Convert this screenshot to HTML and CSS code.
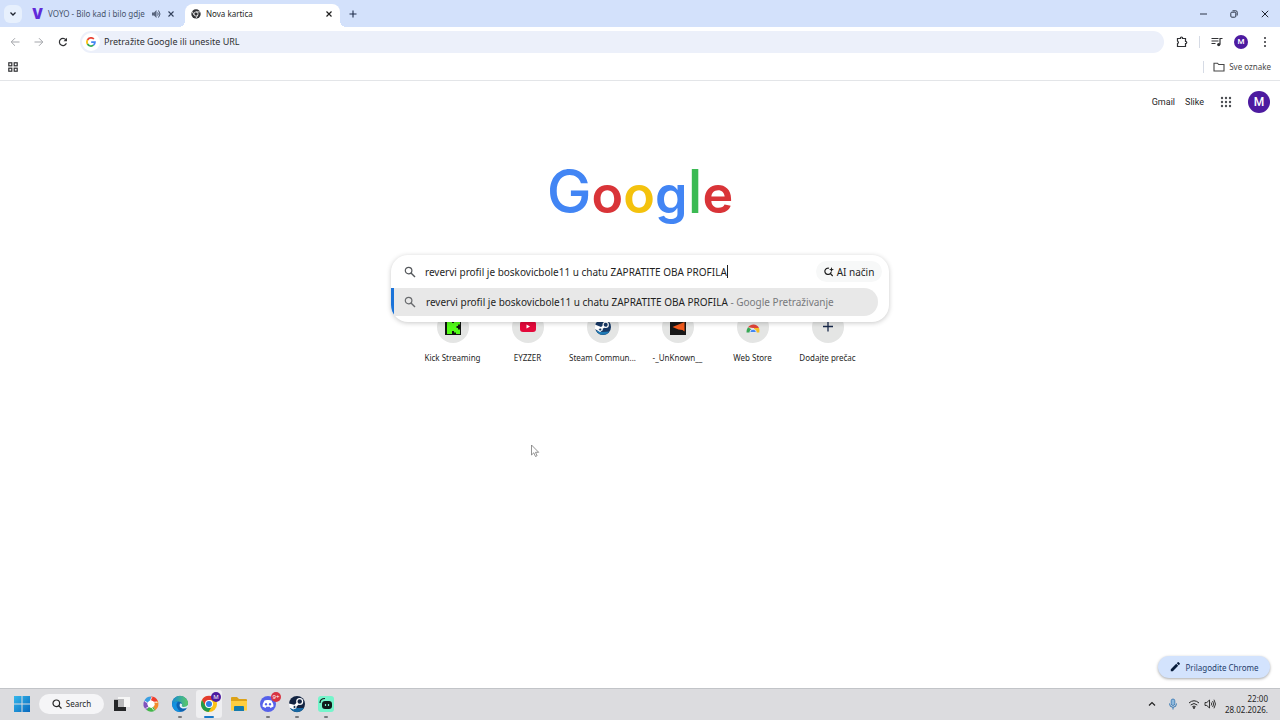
FILE: index.html
```html
<!DOCTYPE html>
<html lang="hr">
<head>
  <meta charset="UTF-8">
  <meta name="viewport" content="width=device-width, initial-scale=1.0">
  <title>Nova kartica</title>
  <link rel="stylesheet" href="styles.css">
</head>
<body>
  <!-- Tabs -->
  <header class="tab-strip">
    <button class="tab-search" aria-label="Pretraži kartice">
      <svg width="8" height="8" viewBox="0 0 8 8"><path d="M1.500 2.500 4 5l2.500-2.500" fill="none" stroke="#1f2430" stroke-width="1.300"/></svg>
    </button>
    <div class="tab">
      <span class="voyo" aria-hidden="true">V</span>
      <span class="tab-title">VOYO - Bilo kad i bilo gdje</span>
      <svg width="10" height="10" viewBox="0 0 10 10"><path d="M1 3.500h2L5.500 1v8L3 6.500H1z" fill="#59657d"/><path d="M6.500 3.500q1.500 1.500 0 3M7.500 1.500q3 3.500 0 7" fill="none" stroke="#46536b"/></svg>
      <button class="tab-close" aria-label="Zatvori"><svg width="8" height="8" viewBox="0 0 8 8"><path d="m1.500 1.500 5 5m0-5-5 5" stroke="#33415c" stroke-width="1.100"/></svg></button>
    </div>
    <div class="tab tab-active">
      <svg width="10" height="10" viewBox="0 0 10 10"><circle cx="5" cy="5" r="4.700" fill="#303134"/><circle cx="5" cy="5" r="2.100" fill="#303134" stroke="#fff" stroke-width=".8"/><path d="M5 2.900h4.300M3.200 6.100 1.100 2.500M6.800 6.100 4.700 9.700" stroke="#fff" stroke-width=".8"/></svg>
      <span class="tab-title">Nova kartica</span>
      <button class="tab-close" aria-label="Zatvori"><svg width="8" height="8" viewBox="0 0 8 8"><path d="m1.500 1.500 5 5m0-5-5 5" stroke="#1f1f1f" stroke-width="1.200"/></svg></button>
    </div>
    <button class="new-tab" aria-label="Nova kartica"><svg width="8" height="8" viewBox="0 0 8 8"><path d="M4 .5v7M.5 4h7" stroke="#1f2d4a" stroke-width="1.100"/></svg></button>
    <div class="window-controls">
      <button aria-label="Minimiziraj"><svg width="8" height="8" viewBox="0 0 8 8"><path d="M1 4h7" stroke="#2c3547"/></svg></button>
      <button aria-label="Vrati"><svg width="8" height="8" viewBox="0 0 8 8"><rect x=".8" y="2.200" width="5" height="5" rx="1" fill="none" stroke="#2c3547"/><path d="M2.500.8h3.300q1.400 0 1.400 1.400v3.300" fill="none" stroke="#2c3547"/></svg></button>
      <button aria-label="Zatvori prozor"><svg width="8" height="8" viewBox="0 0 8 8"><path d="m.8.8 6.400 6.400m0-6.400L.8 7.200" stroke="#1f2430"/></svg></button>
    </div>
  </header>

  <!-- Toolbar -->
  <nav class="toolbar">
    <button class="nav-btn" aria-label="Natrag"><svg width="10" height="10" viewBox="0 0 10 10"><path d="M9.500 5h-8M5 1.200 1.200 5 5 8.800" fill="none" stroke="#a3a5aa"/></svg></button>
    <button class="nav-btn" aria-label="Naprijed"><svg width="10" height="10" viewBox="0 0 10 10"><path d="M.5 5h8M5 1.200 8.800 5 5 8.800" fill="none" stroke="#a3a5aa"/></svg></button>
    <button class="nav-btn" aria-label="Osvježi"><svg width="10" height="10" viewBox="0 0 10 10"><path d="M8.400 6.200A3.600 3.600 0 1 1 7.800 2.700" fill="none" stroke="#303134" stroke-width="1.200"/><path d="M9 .7v3.500H5.500z" fill="#303134"/></svg></button>
    <div class="omnibox">
      <span class="g-badge"><svg width="10" height="10" viewBox="0 0 10 10" fill="none" stroke-width="1.700"><path d="M7.900 2A4 4 0 0 0 1.500 3" stroke="#ea4335"/><path d="M1.500 3a4 4 0 0 0 0 4" stroke="#fbbc05"/><path d="M1.500 7a4 4 0 0 0 6 1.200" stroke="#34a853"/><path d="M7.500 8.200A4 4 0 0 0 9 5.100H5.200" stroke="#4285f4"/></svg></span>
      <input type="text" placeholder="Pretražite Google ili unesite URL" aria-label="Adresna traka">
    </div>
    <div class="toolbar-actions">
      <button aria-label="Proširenja"><svg width="12" height="12" viewBox="0 0 12 12"><path d="M1.500 2.500h3V1.700q1-1.400 2 0v.8h3v3h.6q1.300.9 0 2h-.6v3h-8v-3q1.900-1 0-2.500z" fill="none" stroke="#303134" stroke-width="1.200"/></svg></button>
      <span class="divider"></span>
      <button aria-label="Mediji"><svg width="12" height="12" viewBox="0 0 12 12"><path d="M.5 2.500h7M.5 5h7M.5 7.500h4M9 8.500V2.500h2.500" fill="none" stroke="#303134" stroke-width="1.200"/><circle cx="7.700" cy="8.600" r="1.600" fill="#303134"/></svg></button>
      <button class="avatar avatar-small">M</button>
      <button aria-label="Izbornik"><svg width="12" height="12" viewBox="0 0 12 12" fill="#303134"><circle cx="6" cy="2" r="1"/><circle cx="6" cy="6" r="1"/><circle cx="6" cy="10" r="1"/></svg></button>
    </div>
  </nav>

  <div class="bookmarks">
    <button aria-label="Grupe kartica"><svg width="10" height="10" viewBox="0 0 10 10" fill="none" stroke="#303134" stroke-width="1.200"><rect x=".8" y=".8" width="3" height="3"/><rect x="6.200" y=".8" width="3" height="3"/><rect x=".8" y="6.200" width="3" height="3"/><rect x="6.200" y="6.200" width="3" height="3"/></svg></button>
    <span class="divider"></span>
    <button class="all-bookmarks">
      <svg width="12" height="10" viewBox="0 0 12 10"><path d="M1 1.200h3.500l1.200 1.300H11V9H1z" fill="none" stroke="#474747" stroke-width="1.100"/></svg>
      Sve oznake
    </button>
  </div>

  <!-- New tab page -->
  <main class="ntp">
    <div class="account">
      <a href="#">Gmail</a>
      <a href="#">Slike</a>
      <button class="apps" aria-label="Aplikacije">
        <svg width="12" height="12" viewBox="0 0 12 12" fill="#4b4e52"><circle cx="2" cy="2" r="1.200"/><circle cx="6" cy="2" r="1.200"/><circle cx="10" cy="2" r="1.200"/><circle cx="2" cy="6" r="1.200"/><circle cx="6" cy="6" r="1.200"/><circle cx="10" cy="6" r="1.200"/><circle cx="2" cy="10" r="1.200"/><circle cx="6" cy="10" r="1.200"/><circle cx="10" cy="10" r="1.200"/></svg>
      </button>
      <button class="avatar">M</button>
    </div>

    <h1 class="logo"><span class="blue tall">G</span><span class="red">o</span><span class="yellow">o</span><span class="blue">g</span><span class="green tall">l</span><span class="red">e</span></h1>

    <div class="search">
      <form class="search-box">
        <div class="search-row">
          <svg class="lens" width="12" height="12" viewBox="0 0 12 12"><circle cx="4.600" cy="4.600" r="3.300" fill="none" stroke="#55585c" stroke-width="1.200"/><path d="m7 7 4 4" stroke="#55585c" stroke-width="1.400"/></svg>
          <input class="query" type="text" aria-label="Pretraživanje" value="revervi profil je boskovicbole11 u chatu ZAPRATITE OBA PROFILA">
          <span class="caret"></span>
          <button type="button" class="ai-mode">
            <svg width="10" height="10" viewBox="0 0 10 10"><path d="M5 1.200A3.200 3.200 0 1 0 7.200 5M6 6.200 8.700 9" fill="none" stroke="#1f1f1f" stroke-width="1.200"/><path d="M7.500 0 8.200 1.900 10 2.600l-1.800.7-.7 1.900-.7-1.900L5 2.600l1.800-.7z" fill="#1f1f1f"/></svg>
            AI način
          </button>
        </div>
        <a class="suggestion" href="#">
          <svg class="lens" width="12" height="12" viewBox="0 0 12 12"><circle cx="4.600" cy="4.600" r="3.300" fill="none" stroke="#696b6e" stroke-width="1.200"/><path d="m7 7 4 4" stroke="#696b6e" stroke-width="1.400"/></svg>
          <span class="suggestion-text">revervi profil je boskovicbole11 u chatu ZAPRATITE OBA PROFILA <span class="hint">- Google Pretraživanje</span></span>
        </a>
      </form>
    </div>

    <div class="shortcuts">
      <a class="shortcut" href="#">
        <span class="tile"><svg width="16" height="16" viewBox="0 0 16 16"><path d="M0 0h16v16H0z" fill="#101510"/><path d="M2 1h5v3h2V2.500h2V1h4v4.500h-2V7h-1.500v2H13v1.500h2V15h-4v-1.500H9V12H7v3H2z" fill="#53fc18"/></svg></span>
        Kick Streaming
      </a>
      <a class="shortcut" href="#">
        <span class="tile"><svg width="16" height="16" viewBox="0 0 16 16"><rect y="2" width="16" height="11" rx="3" fill="#e4093b"/><path d="M6.500 5.500v4l3.500-2z" fill="#fff"/></svg></span>
        EYZZER
      </a>
      <a class="shortcut" href="#">
        <span class="tile"><svg width="16" height="16" viewBox="0 0 16 16"><circle cx="8" cy="8" r="8" fill="#173965"/><path d="M1 11.500A8 8 0 0 0 14.500 12.500L7 13z" fill="#1e79b4"/><path d="M0 5.500 6 8l2 3-3 2-5-3z" fill="#fff"/><path d="m5.500 10 5-4" stroke="#fff" stroke-width="2.500"/><circle cx="5.200" cy="10.500" r="1.500" fill="#173965" stroke="#fff" stroke-width=".8"/><circle cx="10.700" cy="5.800" r="2.600" fill="#173965" stroke="#fff" stroke-width="1.200"/></svg></span>
        Steam Commun...
      </a>
      <a class="shortcut" href="#">
        <span class="tile"><svg width="16" height="16" viewBox="0 0 16 16"><path d="M0 0h16v16H0z" fill="#171717"/><path d="M2.500 8 14.500 3v9.500l-2-1.500-4-.5z" fill="#f35b1d"/></svg></span>
        -_UnKnown__
      </a>
      <a class="shortcut" href="#">
        <span class="tile"><svg width="16" height="16" viewBox="0 0 16 16"><path d="M3 8.200A6.500 6.500 0 0 1 14 9H8z" fill="#df4438"/><path d="M3 8.200q-1.500 2-1.500 5.300h4.300l1-3z" fill="#37a854"/><path d="M9 9h5q.8 2 .3 4.500H9z" fill="#f5bd25"/><path d="M4.800 13.500a3.300 3.300 0 0 1 6.600 0z" fill="#4285f4" stroke="#f5f5f5" stroke-width=".8"/></svg></span>
        Web Store
      </a>
      <a class="shortcut" href="#">
        <span class="tile"><svg width="16" height="16" viewBox="0 0 16 16"><path d="M8 2.500v10M3 7.500h10" stroke="#18294a" stroke-width="1.300"/></svg></span>
        Dodajte prečac
      </a>
    </div>

    <button class="customize">
      <svg width="10" height="10" viewBox="0 0 10 10"><path d="M.8 7.200 6.200 1.800l2 2L2.800 9.200l-2 .1zM6.800 1.200l.9-.9q.5-.4 1 0l1 1q.4.500 0 1l-.9.900z" fill="#071c3c"/></svg>
      Prilagodite Chrome
    </button>
    <svg class="pointer" width="10" height="14" viewBox="0 0 10 14"><path d="M1.500 1v10l2.300-2.200L5.500 12.500l1.600-.8-1.600-3.400h3.200z" fill="#fff" stroke="#777" stroke-width=".8"/></svg>
  </main>

  <!-- Windows taskbar -->
  <footer class="taskbar">
    <button class="task" aria-label="Start">
      <svg width="20" height="20" viewBox="0 0 20 20"><defs><linearGradient id="win" x2="1" y2="1"><stop stop-color="#35b8ec"/><stop offset="1" stop-color="#0869be"/></linearGradient></defs><path d="M2 2h7.500v7.500H2zM10.500 2H18v7.500h-7.500zM2 10.500h7.500V18H2zM10.500 10.500H18V18h-7.500z" fill="url(#win)"/></svg>
    </button>
    <button class="task-search">
      <svg width="10" height="10" viewBox="0 0 10 10"><circle cx="4.300" cy="4.300" r="3.300" fill="none" stroke="#252525" stroke-width="1.200"/><path d="m6.700 6.700 2.800 2.800" stroke="#252525" stroke-width="1.200"/></svg>
      Search
    </button>
    <button class="task" aria-label="Task View"><svg width="20" height="20" viewBox="0 0 20 20"><path d="M6 3h12v10H6z" fill="#f6f6f6"/><path d="M2 5h10v9H2z" fill="#b8b8ba"/><path d="M2 6h4v7h8v4H2z" fill="#252628"/></svg></button>
    <button class="task" aria-label="Fotografije"><svg width="20" height="20" viewBox="0 0 20 20"><circle cx="10" cy="10" r="7" fill="#fff"/><g fill="none" stroke-width="4"><path d="M10 4.500a5.500 5.500 0 0 1 5 3.200" stroke="#ee3d2e"/><path d="M15 7.700a5.500 5.500 0 0 1-1.800 6.800" stroke="#f28b2c"/><path d="M13.200 14.500a5.500 5.500 0 0 1-6.500-.1" stroke="#42b649"/><path d="M6.700 14.400A5.500 5.500 0 0 1 5 7.700" stroke="#8053bd"/><path d="M5 7.700a5.500 5.500 0 0 1 5-3.200" stroke="#3b9fe1"/></g><path d="m9.500 6 3 2 1 3-2.500 3-3.500-1L6.500 9z" fill="#fff"/><path d="M9.500 6 11 3M12.500 8l4 .5M11 14l2 2.500M7.500 13l-3 1.500M6.500 9 3.500 7" stroke="#fff" stroke-width=".8"/></svg></button>
    <button class="task open" aria-label="Edge"><svg width="20" height="20" viewBox="0 0 20 20"><defs><linearGradient id="edge" x2="1"><stop stop-color="#168bd5"/><stop offset="1" stop-color="#5bcb64"/></linearGradient></defs><circle cx="10" cy="10" r="8" fill="#0c62b2"/><path d="M2 10a8 8 0 0 1 16-.5q0 4-4.500 4-2.500-.2-1.500-2Q12.500 8 8.500 7.500 4 7.500 2 10z" fill="url(#edge)"/><path d="M2 10q2-3 6.500-2.500Q6 9 6.500 12q1 4 5 5.700Q3 19 2 10z" fill="#1391df"/><path d="M10 9.500q-1.500 4 2.500 5 3 .5 5.500-1.500v-2q-2 2.500-5 2-2-.5-1-2 .5-2-2-1.500z" fill="#e4f2f7"/></svg></button>
    <button class="task current" aria-label="Chrome">
      <svg width="20" height="20" viewBox="0 0 20 20"><circle cx="10" cy="10" r="8" fill="#fbc116"/><path d="M3 6a8 8 0 0 1 14 0h-7l-3.500 6z" fill="#e33b2e"/><path d="M3 6a8 8 0 0 0 6.500 12l3.800-6H6.500z" fill="#229a4b"/><circle cx="10" cy="10" r="4" fill="#fff"/><circle cx="10" cy="10" r="3" fill="#307ee7"/></svg>
      <span class="badge purple">M</span>
    </button>
    <button class="task" aria-label="Datoteke"><svg width="20" height="20" viewBox="0 0 20 20"><path d="M2 4q0-1 1-1h5l2 2h7q1 0 1 1v10H2z" fill="#dca218"/><path d="M2 7h16v9.500H2z" fill="#ffce40"/><path d="M5 13q0-1 1-1h8q1 0 1 1v4H5z" fill="#157bad"/></svg></button>
    <button class="task open" aria-label="Discord">
      <svg width="20" height="20" viewBox="0 0 20 20"><circle cx="10" cy="10" r="8" fill="#5661ea"/><path d="M6.500 6.500 9 6h2l2.500.5q2 3 2 6l-3 1.500-.8-1.200H8.300L7.500 14l-3-1.500q0-3 2-6z" fill="#fff"/><ellipse cx="8" cy="10.300" rx="1.100" ry="1.300" fill="#5661ea"/><ellipse cx="12" cy="10.300" rx="1.100" ry="1.300" fill="#5661ea"/></svg>
      <span class="badge red-badge">9+</span>
    </button>
    <button class="task open" aria-label="Steam"><svg width="20" height="20" viewBox="0 0 20 20"><circle cx="10" cy="10" r="8" fill="#132442"/><path d="M3 14a8 8 0 0 0 14 0z" fill="#1667a2"/><path d="M2 9.500 8 11l1.500 3-3 1.500-4.300-2z" fill="#fff"/><path d="m7.500 12.500 5-4.500" stroke="#fff" stroke-width="2.800"/><circle cx="7.500" cy="13" r="1.500" fill="#17385d" stroke="#fff" stroke-width=".8"/><circle cx="12.700" cy="7.500" r="2.900" fill="#132442" stroke="#fff" stroke-width="1.300"/></svg></button>
    <button class="task open" aria-label="Streamlabs"><svg width="20" height="20" viewBox="0 0 20 20"><rect x="2" y="2" width="16" height="16" rx="3" fill="#75f5cb"/><rect x="6" y="7" width="10" height="8" rx="3" fill="#101b1b"/><path d="M4 9q0-4.500 5-4.500" fill="none" stroke="#101b1b" stroke-width="1.200"/><path d="M9.500 10v2m3-2v2" stroke="#75f5cb" stroke-width="1.200"/></svg></button>

    <div class="tray">
      <button aria-label="Skrivene ikone"><svg width="12" height="12" viewBox="0 0 12 12"><path d="m3 7.500 3-3 3 3" fill="none" stroke="#222" stroke-width="1.200"/></svg></button>
      <button aria-label="Mikrofon"><svg width="12" height="12" viewBox="0 0 12 12"><rect x="4.200" y="1" width="3.600" height="6.500" rx="1.800" fill="#8fb9dc" stroke="#3275b2" stroke-width=".8"/><path d="M2.500 5.500q0 3.800 3.500 3.800t3.500-3.800M6 9.300v2.200" fill="none" stroke="#3275b2"/></svg></button>
      <button class="net" aria-label="Mreža i zvuk">
        <svg width="12" height="12" viewBox="0 0 12 12" fill="none" stroke="#242424"><path d="M1 5q5-4.500 10 0M2.700 7q3.300-3 6.600 0M4.300 8.800q1.700-1.500 3.400 0"/><circle cx="6" cy="9.900" r=".6" fill="#242424"/></svg>
        <svg width="12" height="12" viewBox="0 0 12 12" fill="none" stroke="#242424"><path d="M1 4.500h1.800L5.500 2v8L2.800 7.500H1zM7.200 4.500q1.200 1.500 0 3M8.600 3q2.300 3 0 6M10 1.700q3 4.300 0 8.600" stroke-width=".9"/></svg>
      </button>
      <div class="clock"><time>22:00</time><time>28.02.2026.</time></div>
    </div>
  </footer>
</body>
</html>
```

FILE: styles.css
```css
* {
  box-sizing: border-box;
}
body {
  margin: 0;
  height: 100vh;
  display: flex;
  flex-direction: column;
  overflow: hidden;
  font-family: "Noto Sans", "Open Sans", sans-serif;
  font-size: 8px;
  color: #1f1f1f;
  background-color: #fff;
}
button,
input {
  font: inherit;
  color: inherit;
  border: none;
  background: none;
  padding: 0;
  outline: none;
}
button {
  display: flex;
  align-items: center;
  justify-content: center;
  cursor: pointer;
}
a {
  color: inherit;
  text-decoration: none;
}
svg {
  display: block;
  flex-shrink: 0;
}

/* tabs */
.tab-strip {
  display: flex;
  align-items: center;
  height: 27px;
  padding-left: 4px;
  background-color: #d3e1fb;
}
.tab-search {
  width: 18px;
  height: 18px;
  border-radius: 6px;
  background-color: #e7f0fd;
}
.tab {
  display: flex;
  align-items: center;
  gap: 6px;
  width: 159px;
  height: 23px;
  padding: 0 6px 4px 10px;
  align-self: flex-end;
  color: #46536b;
}
.tab-title {
  flex: 1;
  white-space: nowrap;
}
.tab-active {
  position: relative;
  width: 155px;
  margin-left: 4px;
  padding-left: 6px;
  gap: 5px;
  background-color: #fff;
  border-radius: 8px 8px 0 0;
  color: #1f1f1f;
}
/* flared feet of the active tab */
.tab-active::before,
.tab-active::after {
  content: "";
  position: absolute;
  bottom: 0;
  width: 6px;
  height: 6px;
}
.tab-active::before {
  right: 100%;
  background: radial-gradient(circle at 0 0, transparent 6px, #fff 6px);
}
.tab-active::after {
  left: 100%;
  background: radial-gradient(circle at 100% 0, transparent 6px, #fff 6px);
}
.tab-close {
  width: 10px;
  height: 10px;
}
.voyo {
  width: 10px;
  font-family: Inter, sans-serif;
  font-size: 14px;
  font-weight: 900;
  color: #6029d9;
}
.new-tab {
  width: 18px;
  height: 18px;
  margin-left: 4px;
}
.window-controls {
  display: flex;
  margin-left: auto;
}
.window-controls button {
  width: 31px;
  height: 27px;
}

/* toolbar */
.toolbar {
  display: flex;
  align-items: center;
  height: 29px;
  padding: 0 9px 0 3px;
}
.nav-btn {
  width: 24px;
  height: 24px;
}
.omnibox {
  flex: 1;
  display: flex;
  align-items: center;
  gap: 4px;
  height: 22px;
  margin-left: 5px;
  padding-left: 2px;
  border-radius: 11px;
  background-color: #ecf0fa;
}
.omnibox input {
  flex: 1;
  font-size: 9px;
}
.omnibox input::placeholder {
  color: #303134;
}
.g-badge {
  padding: 4px;
  border-radius: 50%;
  background-color: #fff;
}
.toolbar-actions {
  display: flex;
  align-items: center;
  gap: 11px;
  padding-left: 12px;
}
.divider {
  width: 1px;
  height: 12px;
  background-color: #d6dbe5;
}
.avatar {
  width: 22px;
  height: 22px;
  border-radius: 50%;
  background-color: #4d1ba0;
  color: #fff;
  font-family: Roboto, sans-serif;
  font-size: 12px;
  font-weight: 500;
}
.avatar-small {
  width: 14px;
  height: 14px;
  font-size: 8px;
}
.bookmarks {
  display: flex;
  align-items: center;
  gap: 9px;
  height: 25px;
  padding: 0 9px 3px 8px;
  border-bottom: 1px solid #e3e5e8;
}
.bookmarks .divider {
  margin-left: auto;
}
.all-bookmarks {
  gap: 4px;
  color: #474747;
}

/* new tab page */
.ntp {
  flex: 1;
  position: relative;
  display: flex;
  flex-direction: column;
  align-items: center;
}
.account {
  display: flex;
  align-items: center;
  align-self: flex-end;
  gap: 10px;
  padding: 10px 10px 0 0;
  font-family: Roboto, sans-serif;
  font-size: 9px;
}
.apps {
  width: 24px;
  height: 22px;
}
.logo {
  margin: 42px 0 0;
  font-family: Inter, sans-serif;
  font-size: 52px;
  font-weight: 600;
  line-height: 72px;
}
.tall {
  font-size: 60px;
  font-weight: 500;
}
.blue {
  color: #4285f4;
}
.red {
  color: #d93438;
}
.yellow {
  color: #f4c20d;
}
.green {
  color: #3cba54;
}
.search {
  position: relative;
  width: 498px;
  height: 34px;
  margin-top: 24px;
}
/* the open box covers the top of the shortcuts */
.search-box {
  position: absolute;
  top: 0;
  left: 0;
  right: 0;
  z-index: 1;
  padding-bottom: 6px;
  border-radius: 17px;
  background-color: #fff;
  box-shadow: 0 1px 5px rgba(0, 0, 0, 0.22);
  overflow: hidden;
  font-size: 10px;
}
.search-row {
  display: flex;
  align-items: center;
  height: 33px;
  padding: 0 7px 0 13px;
}
.query {
  field-sizing: content;
  margin-left: 9px;
}
.caret {
  width: 1px;
  height: 13px;
  background-color: #1f1f1f;
}
.ai-mode {
  gap: 3px;
  width: 66px;
  height: 21px;
  margin-left: auto;
  border-radius: 11px;
  background-color: #f7f8f8;
}
.suggestion {
  display: flex;
  align-items: center;
  gap: 10px;
  height: 28px;
  margin-right: 11px;
  padding-left: 10px;
  border-left: 3px solid #1a73d9;
  border-radius: 0 14px 14px 0;
  background-color: #e8e8e8;
}
.hint {
  color: #77797c;
}
.shortcuts {
  display: grid;
  grid-template-columns: repeat(6, 75px);
  margin-top: 22px;
}
.shortcut {
  display: flex;
  flex-direction: column;
  align-items: center;
  gap: 9px;
  line-height: 12px;
  white-space: nowrap;
}
.tile {
  padding: 8px;
  border-radius: 50%;
  background-color: #e4e5e4;
}
.customize {
  position: absolute;
  right: 10px;
  bottom: 10px;
  gap: 6px;
  width: 112px;
  height: 22px;
  border-radius: 11px;
  background-color: #d3e3fd;
  box-shadow: 0 1px 3px rgba(0, 0, 0, 0.35);
  color: #243d6b;
}
.pointer {
  position: absolute;
  left: 530px;
  top: 363px;
}

/* taskbar */
.taskbar {
  display: flex;
  align-items: center;
  height: 32px;
  padding: 0 12px 2px 7px;
  border-top: 1px solid #c2c4c8;
  background-color: #dcdcdf;
}
.task {
  position: relative;
  width: 29px;
  height: 28px;
  border-radius: 3px;
}
.task-search {
  gap: 4px;
  width: 65px;
  height: 20px;
  margin: 0 3px;
  border-radius: 10px;
  background-color: #f5f5f7;
}
.current {
  width: 26px;
  margin: 0 2px;
  background-color: #efeff1;
}
.open::after,
.current::after {
  content: "";
  position: absolute;
  bottom: 0;
  width: 4px;
  height: 2px;
  border-radius: 1px;
  background-color: #77797d;
}
.current::after {
  width: 10px;
  background-color: #1878c8;
}
.badge {
  position: absolute;
  top: 2px;
  right: 1px;
  width: 10px;
  height: 10px;
  border-radius: 50%;
  font-size: 6px;
  line-height: 10px;
  color: #fff;
}
.purple {
  background-color: #4d1ba0;
}
.red-badge {
  background-color: #d83442;
}
.tray {
  display: flex;
  align-items: center;
  gap: 9px;
  margin-left: auto;
}
.net {
  gap: 4px;
}
.clock {
  display: flex;
  flex-direction: column;
  text-align: right;
  line-height: 11px;
}
```
